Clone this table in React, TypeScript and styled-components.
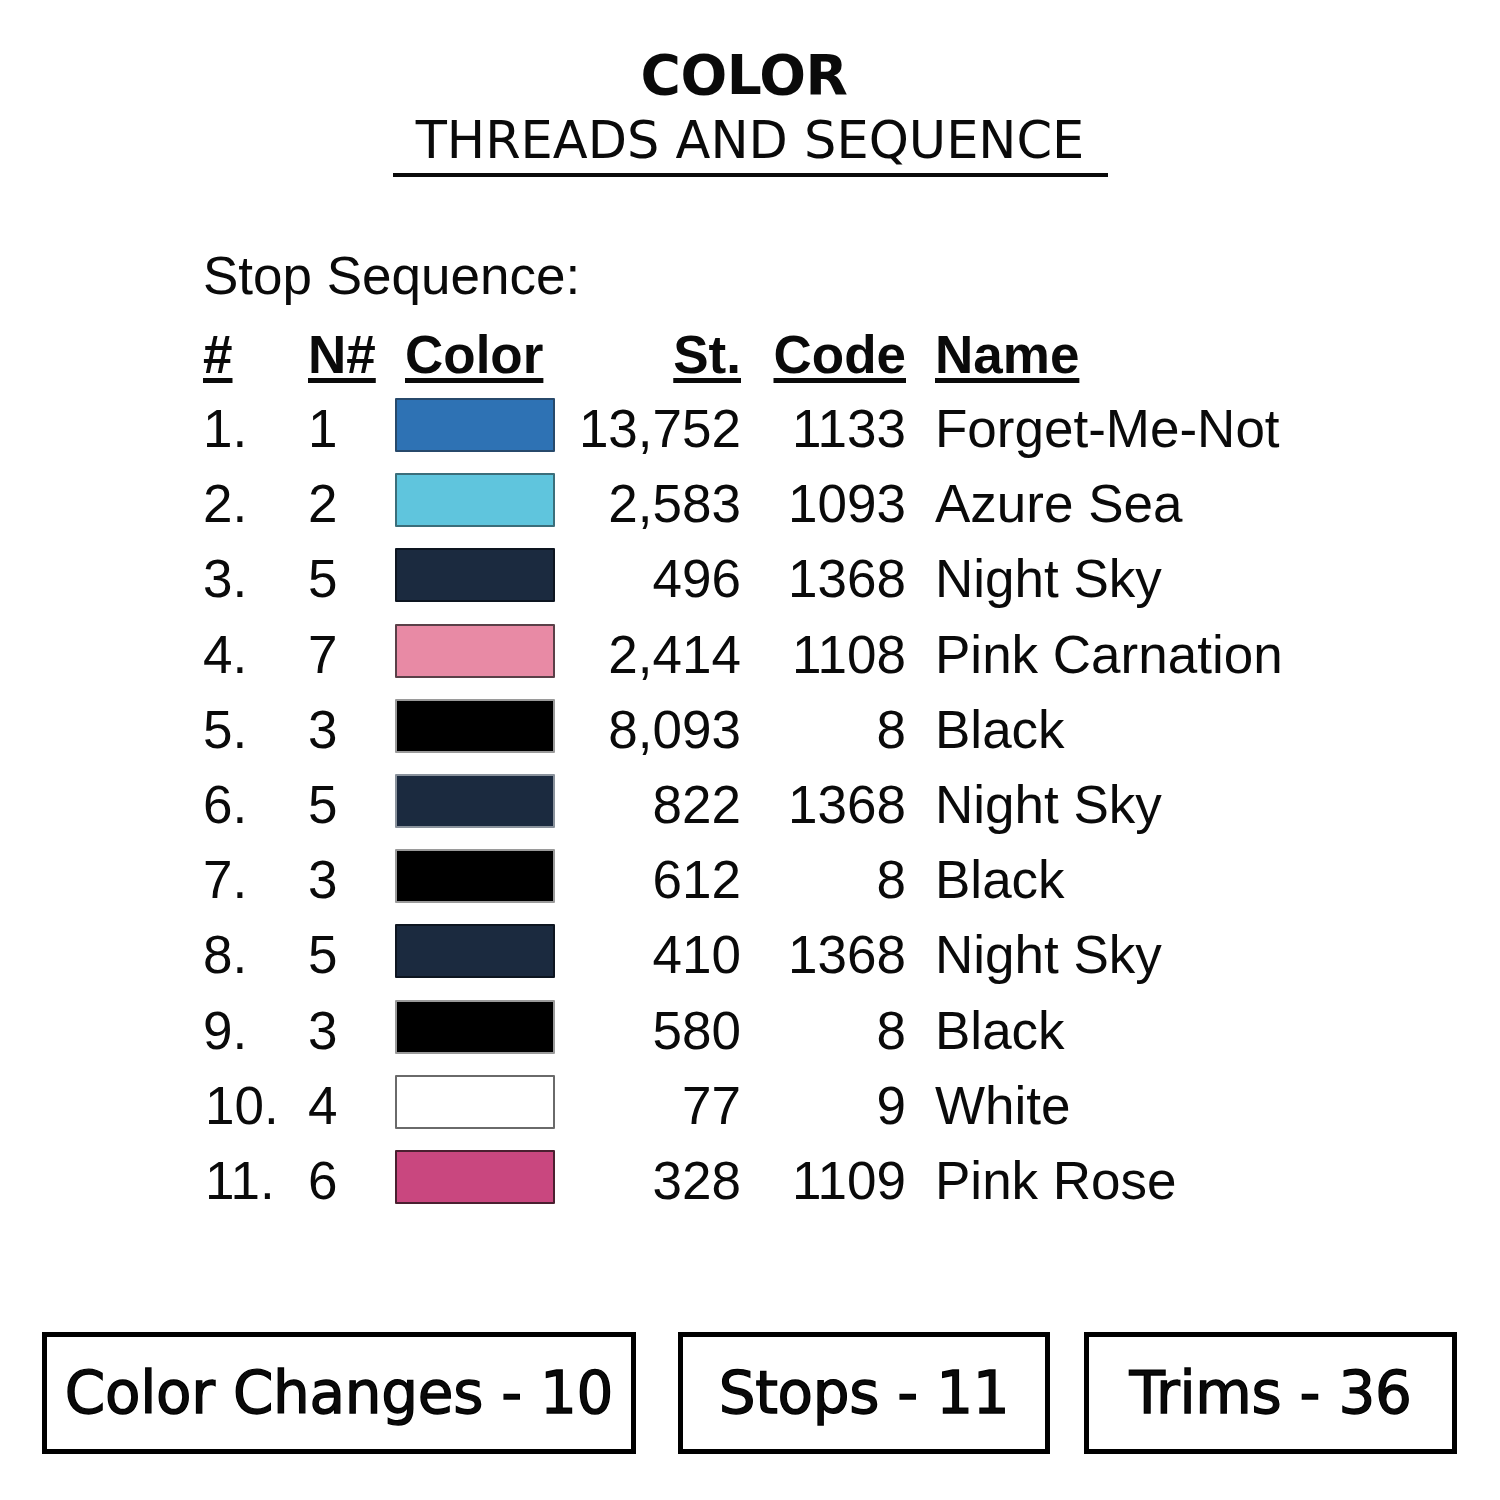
import React from "react";
import styled, { createGlobalStyle } from "styled-components";

const GlobalStyle = createGlobalStyle`
  html, body {
    margin: 0;
    padding: 0;
    background: #ffffff;
  }
`;

type Thread = {
  n: number;
  color: string;
  edge: string;
  st: string;
  code: string;
  name: string;
};

const threads: Thread[] = [
  { n: 1, color: "#2e72b4", edge: "#27496b", st: "13,752", code: "1133", name: "Forget-Me-Not" },
  { n: 2, color: "#5fc5dd", edge: "#3b6e7a", st: "2,583", code: "1093", name: "Azure Sea" },
  { n: 5, color: "#1b2a3f", edge: "#0d1520", st: "496", code: "1368", name: "Night Sky" },
  { n: 7, color: "#e88aa5", edge: "#5a4048", st: "2,414", code: "1108", name: "Pink Carnation" },
  { n: 3, color: "#000000", edge: "#9a9a9a", st: "8,093", code: "8", name: "Black" },
  { n: 5, color: "#1b2a3f", edge: "#8a929c", st: "822", code: "1368", name: "Night Sky" },
  { n: 3, color: "#000000", edge: "#9a9a9a", st: "612", code: "8", name: "Black" },
  { n: 5, color: "#1b2a3f", edge: "#0d1520", st: "410", code: "1368", name: "Night Sky" },
  { n: 3, color: "#000000", edge: "#9a9a9a", st: "580", code: "8", name: "Black" },
  { n: 4, color: "#ffffff", edge: "#6a6a6a", st: "77", code: "9", name: "White" },
  { n: 6, color: "#c9477f", edge: "#4a2030", st: "328", code: "1109", name: "Pink Rose" },
];

// widths and left gaps read off the picture
const totals = [
  { label: "Color Changes - 10", width: 594, gap: 0 },
  { label: "Stops - 11", width: 372, gap: 42 },
  { label: "Trims - 36", width: 373, gap: 34 },
];

const App = () => {
  return (
    <Page>
      <GlobalStyle />
      <Heading>
        <Title>COLOR</Title>
        <Subtitle>THREADS AND SEQUENCE</Subtitle>
      </Heading>

      <Sequence>
        <Caption>Stop Sequence:</Caption>
        <HeadRow>
          <Head>#</Head>
          <Head>N#</Head>
          <Head $pad={10}>Color</Head>
          <Head $right>St.</Head>
          <Head $right>Code</Head>
          <Head $pad={29}>Name</Head>
        </HeadRow>
        {threads.map((t, i) => (
          <Row key={i}>
            <Cell $pad={i >= 9 ? 2 : 0}>{i + 1}.</Cell>
            <Cell>{t.n}</Cell>
            <Swatch $fill={t.color} $edge={t.edge} />
            <Cell $right>{t.st}</Cell>
            <Cell $right>{t.code}</Cell>
            <Cell $pad={29}>{t.name}</Cell>
          </Row>
        ))}
      </Sequence>

      <Totals>
        {totals.map((b) => (
          <TotalBox key={b.label} $width={b.width} $gap={b.gap}>
            {b.label}
          </TotalBox>
        ))}
      </Totals>
    </Page>
  );
};

const Page = styled.div`
width: 1500px;
height: 1500px;
background: #ffffff;
color: #0a0a0a;
display: flex;
flex-direction: column;
overflow: hidden;
`

const Heading = styled.header`
display: flex;
flex-direction: column;
align-items: center;
padding-top: 48px;
`

const Title = styled.h1`
margin: 0 12px 0 0;
font-family: "DejaVu Sans", sans-serif;
font-weight: 700;
font-size: 55px;
line-height: 55px;
letter-spacing: -0.5px;
`

const Subtitle = styled.h2`
margin: 13px 0 0;
width: 715px;
text-align: center;
font-family: "DejaVu Sans", sans-serif;
font-weight: 400;
font-size: 51px;
line-height: 50px;
padding-bottom: 7px;
border-bottom: 4px solid #0a0a0a;
`

const Sequence = styled.section`
margin-top: 61px;
padding-left: 203px;
font-family: "Liberation Sans", Arial, sans-serif;
font-size: 53px;
`

const Caption = styled.div`
line-height: 75px;
margin-bottom: 6px;
`

const Grid = styled.div`
display: grid;
grid-template-columns: 105px 87px 160px 186px 165px auto;
align-items: start;
`

const HeadRow = styled(Grid)`
height: 72px;
line-height: 72px;
font-weight: 700;
`

const Row = styled(Grid)`
height: 75.2px;
line-height: 75px;
`

const Head = styled.span<{ $right?: boolean; $pad?: number }>`
text-align: ${(p) => (p.$right ? "right" : "left")};
padding-left: ${(p) => p.$pad || 0}px;
text-decoration: underline;
text-decoration-thickness: 5px;
text-underline-offset: 5px;
white-space: nowrap;
`

const Cell = styled.span<{ $right?: boolean; $pad?: number }>`
text-align: ${(p) => (p.$right ? "right" : "left")};
padding-left: ${(p) => p.$pad || 0}px;
white-space: nowrap;
`

const Swatch = styled.div<{ $fill: string; $edge: string }>`
box-sizing: border-box;
margin-top: 7px;
width: 160px;
height: 54px;
background: ${(p) => p.$fill};
border: 2px solid ${(p) => p.$edge};
border-radius: 1px;
`

const Totals = styled.div`
margin-top: 114px;
padding-left: 42px;
display: flex;
`

const TotalBox = styled.div<{ $width: number; $gap: number }>`
box-sizing: border-box;
width: ${(p) => p.$width}px;
margin-left: ${(p) => p.$gap}px;
height: 122px;
border: 5px solid #000000;
display: flex;
align-items: center;
justify-content: center;
font-family: "DejaVu Sans", sans-serif;
font-size: 58px;
font-weight: 400;
-webkit-text-stroke: 1.3px #000000;
letter-spacing: -0.3px;
white-space: nowrap;
`

export default App;
